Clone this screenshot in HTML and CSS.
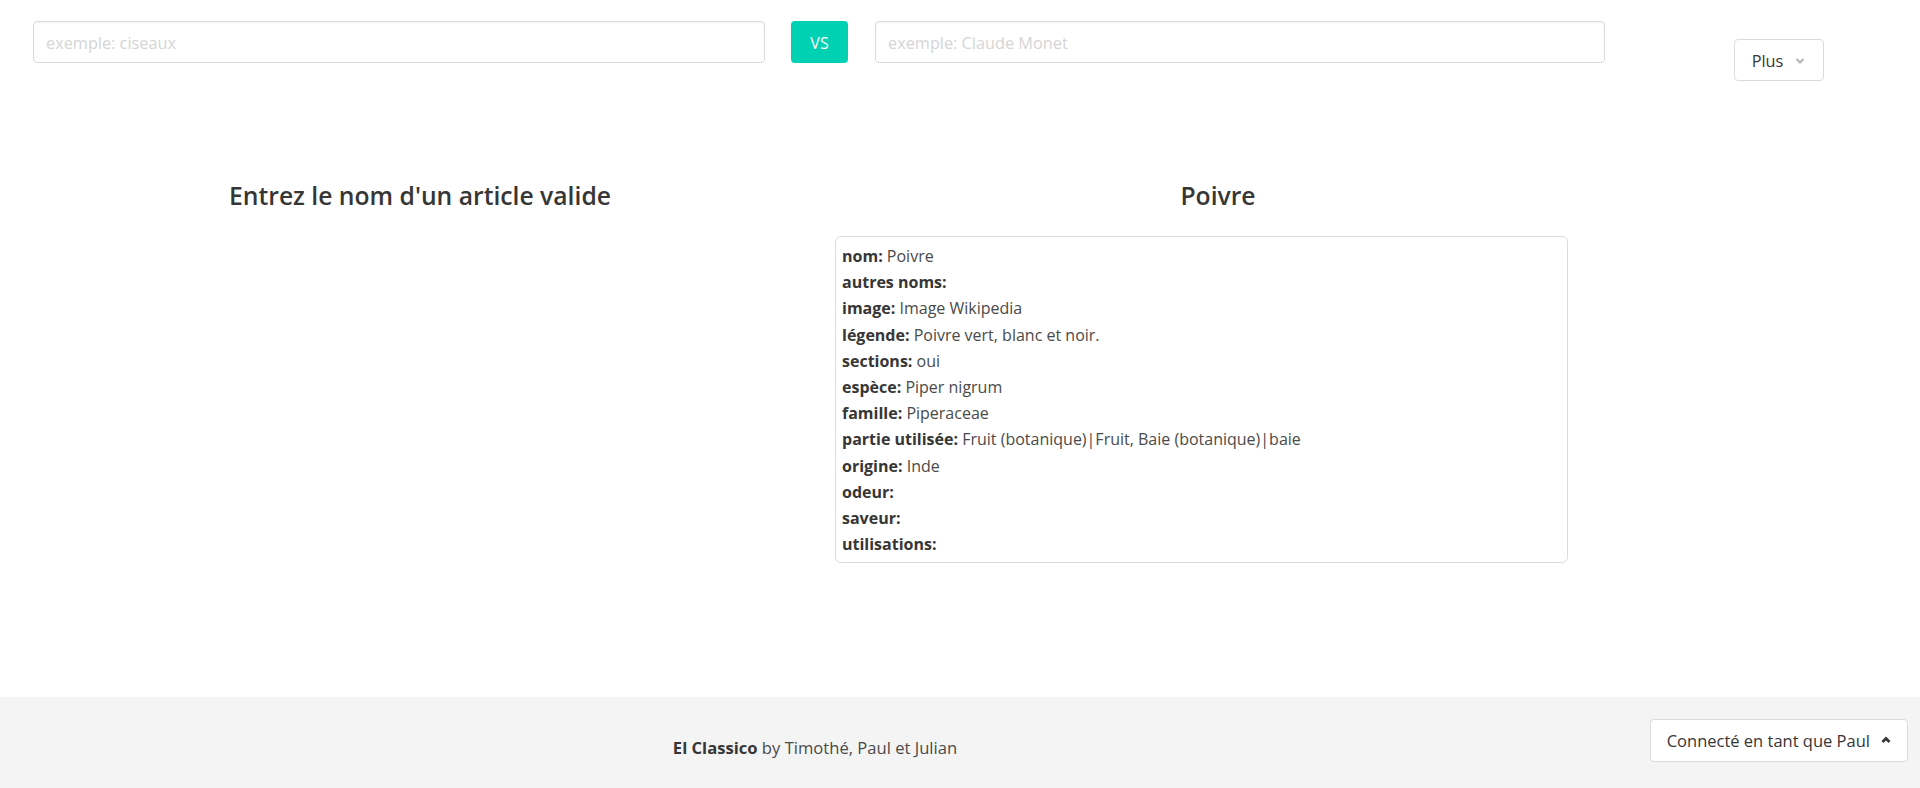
FILE: index.html
```html
<!DOCTYPE html>
<html lang="fr">
<head>
<meta charset="utf-8">
<title>El Classico</title>
<link rel="stylesheet" href="styles.css">
</head>
<body>
<header class="topbar">
  <input class="field field-left" type="text" placeholder="exemple: ciseaux">
  <button class="vs-btn">VS</button>
  <input class="field field-right" type="text" placeholder="exemple: Claude Monet">
  <button class="plus-btn">Plus
    <svg class="chev-down" width="12" height="10" viewBox="0 0 12 10"><path d="M2.5 3 L6 6.5 L9.5 3" fill="none" stroke="#b5b5b5" stroke-width="2.2"/></svg>
  </button>
</header>
<main class="compare">
  <section class="col">
    <h2 class="col-title">Entrez le nom d'un article valide</h2>
  </section>
  <section class="col">
    <h2 class="col-title">Poivre</h2>
    <div class="infobox">
      <div class="row"><b>nom:</b> Poivre</div>
      <div class="row"><b>autres noms:</b></div>
      <div class="row"><b>image:</b> Image Wikipedia</div>
      <div class="row"><b>légende:</b> Poivre vert, blanc et noir.</div>
      <div class="row"><b>sections:</b> oui</div>
      <div class="row"><b>espèce:</b> Piper nigrum</div>
      <div class="row"><b>famille:</b> Piperaceae</div>
      <div class="row"><b>partie utilisée:</b> Fruit (botanique)|Fruit, Baie (botanique)|baie</div>
      <div class="row"><b>origine:</b> Inde</div>
      <div class="row"><b>odeur:</b></div>
      <div class="row"><b>saveur:</b></div>
      <div class="row"><b>utilisations:</b></div>
    </div>
  </section>
</main>
<footer class="footer">
  <p class="credits"><b>El Classico</b> by Timothé, Paul et Julian</p>
  <button class="user-btn">Connecté en tant que Paul
    <svg class="chev-up" width="12" height="10" viewBox="0 0 12 10"><path d="M2.5 7 L6 3.5 L9.5 7" fill="none" stroke="#363636" stroke-width="2.8"/></svg>
  </button>
</footer>
</body>
</html>
```

FILE: styles.css
```css
* { box-sizing: border-box; }
html, body { margin: 0; padding: 0; }
body {
  font-family: "Open Sans", "Noto Sans", sans-serif;
  color: #4a4a4a;
  font-size: 16px;
  background: #fff;
  min-height: 100vh;
  display: flex;
  flex-direction: column;
}
.topbar {
  display: flex;
  align-items: flex-start;
  padding: 21px 0 0 33px;
  height: 81px;
}
.field {
  height: 42px;
  border: 1px solid #dbdbdb;
  border-radius: 4px;
  box-shadow: inset 0 1px 2px rgba(10,10,10,0.05);
  padding: 2px 12px 0;
  font-family: inherit;
  font-size: 16.3px;
  color: #363636;
  outline: none;
}
.field::placeholder { color: #d5d5d5; }
.field-left { width: 732px; }
.field-right { width: 730px; margin-left: 27px; }
.vs-btn {
  margin-left: 26px;
  width: 57px;
  height: 42px;
  border: none;
  border-radius: 4px;
  background: #00d1b2;
  color: #fff;
  font-family: inherit;
  font-size: 16px;
  padding: 1px 0 0;
}
.plus-btn {
  margin-left: 129px;
  margin-top: 18px;
  width: 90px;
  height: 42px;
  background: #fff;
  border: 1px solid #dbdbdb;
  border-radius: 4px;
  font-family: inherit;
  font-size: 16.3px;
  color: #363636;
  display: flex;
  align-items: center;
  justify-content: center;
  gap: 11px;
  padding: 2px 0 0 0;
}
.compare {
  flex: 1;
  display: flex;
  padding: 100px 0 0 21px;
}
.col { width: 798px; }
.col-title {
  margin: 0;
  text-align: center;
  font-size: 24.7px;
  line-height: 30px;
  font-weight: 600;
  color: #363636;
}
.infobox {
  margin: 25px 0 0 16px;
  width: 733px;
  border: 1px solid #dbdbdb;
  border-radius: 6px;
  padding: 6px 6px 5px;
  color: #4a4a4a;
}
.row {
  line-height: 26.2px;
  font-size: 16px;
}
.row b { color: #363636; font-weight: 700; }
.footer {
  height: 91px;
  background: #f4f4f4;
  display: flex;
  align-items: center;
  padding-right: 12px;
}
.credits {
  margin: 9px 0 0;
  width: 1650px;
  padding-right: 20px;
  text-align: center;
  font-size: 16.6px;
  color: #4a4a4a;
}
.credits b { color: #363636; }
.user-btn {
  width: 258px;
  height: 43px;
  margin-top: -5px;
  background: #fff;
  border: 1px solid #dbdbdb;
  border-radius: 4px;
  font-family: inherit;
  font-size: 16.5px;
  color: #363636;
  display: flex;
  align-items: center;
  justify-content: flex-end;
  gap: 10px;
  padding: 0 15px 0 0;
}
```
